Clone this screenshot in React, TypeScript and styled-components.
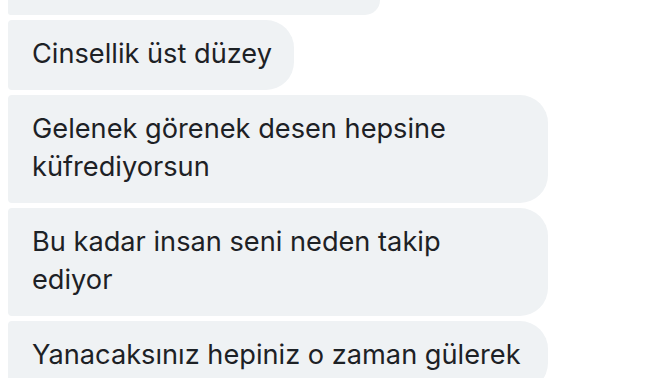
import React from "react";
import styled, { createGlobalStyle } from "styled-components";

const GlobalStyle = createGlobalStyle`
  html, body {
    margin: 0;
    padding: 0;
    background: #ffffff;
    overflow: hidden;
  }
  body {
    font-family: Inter, "Noto Sans", "Liberation Sans", sans-serif;
  }
`;

const Thread = styled.div`
  display: flex;
  flex-direction: column;
  align-items: flex-start;
  gap: 5px;
  padding: 0 0 0 8px;
  width: 672px;
  height: 378px;
  box-sizing: border-box;
  overflow: hidden;
`;

const Bubble = styled.div<{ $cut?: boolean; $full?: boolean }>`
  box-sizing: border-box;
  max-width: 540px;
  width: ${(p) => (p.$full ? "540px" : "auto")};
  height: ${(p) => (p.$cut ? "15px" : "auto")};
  flex-shrink: 0;
  padding: ${(p) => (p.$cut ? "0" : "15px 22px 17px 24px")};
  background: #eff2f4;
  color: #1d2125;
  font-size: 27.2px;
  line-height: 38px;
  letter-spacing: 0;
  border-radius: ${(p) => (p.$cut ? "0 0 28px 4px" : "4px 28px 28px 4px")};
`;

const messages = [
  "Cinsellik üst düzey",
  "Gelenek görenek desen hepsine küfrediyorsun",
  "Bu kadar insan seni neden takip ediyor",
];

export default function App() {
  return (
    <>
      <GlobalStyle />
      <Thread>
        <Bubble $cut style={{ width: 372 }} />
        {messages.map((m) => (
          <Bubble key={m}>{m}</Bubble>
        ))}
        <Bubble $full>Yanacaksınız hepiniz o zaman gülerek</Bubble>
      </Thread>
    </>
  );
}
